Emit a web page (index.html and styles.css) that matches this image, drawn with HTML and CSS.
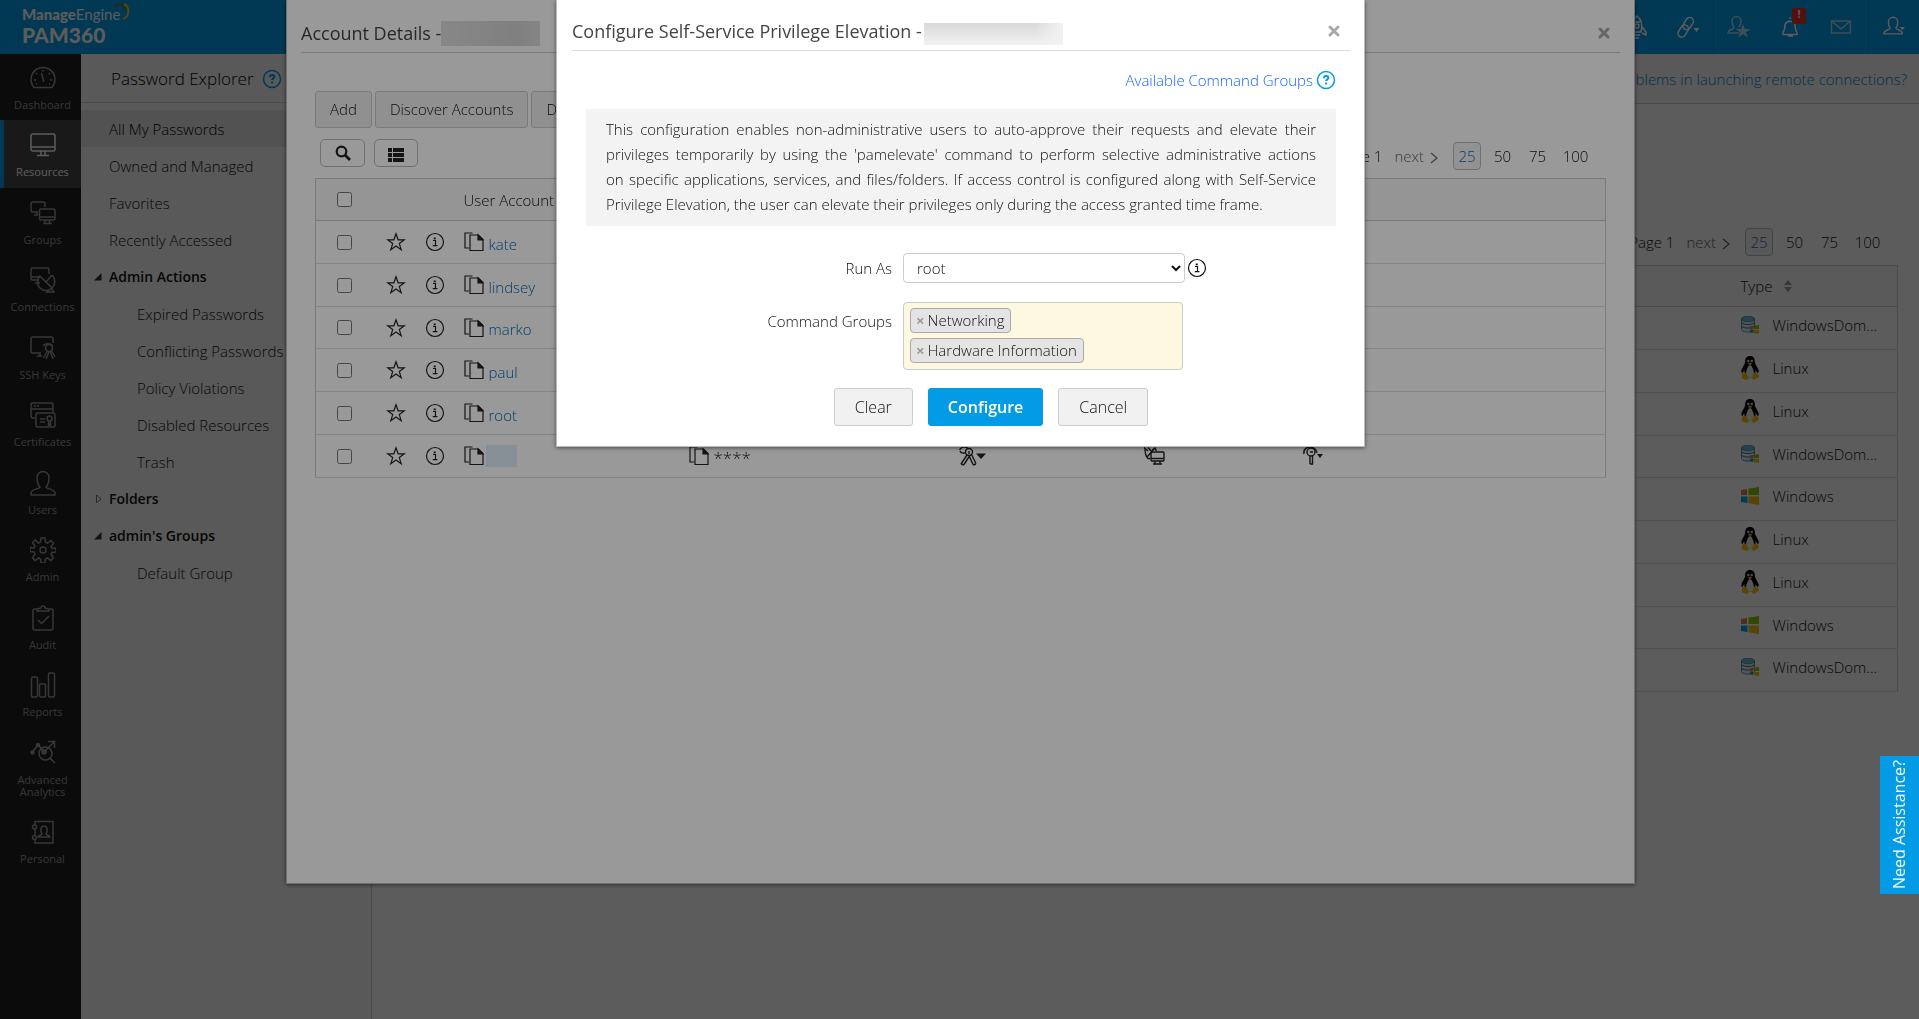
FILE: index.html
```html
<!DOCTYPE html>
<html lang="en">
<head>
<meta charset="utf-8">
<title>ManageEngine PAM360</title>
<link rel="stylesheet" href="styles.css">
</head>
<body>
<svg class="sprite" aria-hidden="true">
  <symbol id="i-dashboard" viewBox="0 0 26 26"><path d="M4 22.500H22A12 12 0 1 0 4 22.500Z" stroke-linejoin="round"/><path d="M11.500 8l2 7.500M13 5v1.500M6 8l1.200 1.200M20 8l-1.200 1.200M4 15h2M20 15h2M6 19h1M19 19h1M13.500 15v2"/></symbol>
  <symbol id="i-resources" viewBox="0 0 26 26"><rect x="1" y="2" width="24" height="17" rx="2"/><path d="M1 15h24M11 19v4M15 19v4M7 23.500h12"/></symbol>
  <symbol id="i-groups" viewBox="0 0 26 26"><path d="M8 12H2.500A1.500 1.500 0 0 1 1 10.500V3.500A1.500 1.500 0 0 1 2.500 2h11A1.500 1.500 0 0 1 15 3.500V7M4 15h4M7 12v3"/><rect x="9.500" y="9" width="15.500" height="11" rx="1.500"/><path d="M9.500 17H25M15 20v3M19.500 20v3M13 23.500h9"/></symbol>
  <symbol id="i-connections" viewBox="0 0 26 26"><path d="M9 13H2.500A1.500 1.500 0 0 1 1 11.500V2.500A1.500 1.500 0 0 1 2.500 1h15A1.500 1.500 0 0 1 19 2.500V7M1 10h8M5 16h5M8 13v3M10 9a8 8 0 0 0 12 12ZM16 15l6-7M22 8a9 9 0 0 1 0 13M21 21l3 4h-7l3-3"/></symbol>
  <symbol id="i-ssh" viewBox="0 0 26 26"><path d="M11 18H2.500A1.500 1.500 0 0 1 1 16.500V3.500A1.500 1.500 0 0 1 2.500 2h19A1.500 1.500 0 0 1 23 3.500V8M7 21h5M10 18v3M13 11c2-3 7-3 10 0"/><circle cx="19" cy="13" r="3.500"/><path d="M17.500 16L13.500 23M19 17l-3 7M20 16l3 8M21 15l4 7"/></symbol>
  <symbol id="i-cert" viewBox="0 0 26 26"><path d="M5 16H2.500A1.500 1.500 0 0 1 1 14.500V2.500A1.500 1.500 0 0 1 2.500 1h19A1.500 1.500 0 0 1 23 2.500V10M1 7h22M4 4h2M7 4h2"/><rect x="6" y="11" width="19" height="14" rx="1.500"/><path d="M10 17h5M10 20h5"/><circle cx="19.500" cy="16.500" r="2.500"/><path d="M18.500 19v4l1-1 1 1v-4"/></symbol>
  <symbol id="i-user" viewBox="0 0 26 26"><path d="M10 17C7 14 7 11 7 7.500A6 6 0 0 1 19 7.500C19 11 19 14 16 17C16 19 25 19 25 23V25H1V23C1 19 10 19 10 17Z" stroke-linejoin="round"/></symbol>
  <symbol id="i-gear" viewBox="0 0 26 26"><path d="M11 1h4l.5 4 2 1 3.300-2.500 2.700 2.700L21 9.500l1 2 4-.5v4l-4 .5-1 2 2.500 3.300-2.700 2.700-3.300-2.500-2 1-.5 4h-4l-.5-4-2-1-3.300 2.500-2.700-2.700L5 17l-1-2-4-.500v-4l4 .500 1-2-2.500-3.300 2.700-2.700L8.500 6l2-1Z"/><circle cx="13" cy="13" r="3"/></symbol>
  <symbol id="i-audit" viewBox="0 0 26 26"><path d="M8 4H4.500A1.500 1.500 0 0 0 3 5.500V23.500A1.500 1.500 0 0 0 4.500 25H21.500A1.500 1.500 0 0 0 23 23.500V5.500A1.500 1.500 0 0 0 21.500 4H18M7 6V4l4-1a2 2 0 0 1 4 0l4 1v2ZM8 15l3.500 3.500L19 11"/></symbol>
  <symbol id="i-reports" viewBox="0 0 26 26"><rect x="1.500" y="5" width="6" height="20" rx="1.500"/><rect x="9.500" y="12" width="6" height="13" rx="1"/><rect x="18.500" y="1" width="6" height="24" rx="1.500"/></symbol>
  <symbol id="i-analytics" viewBox="0 0 26 26"><path d="M2.500 12L8 5l5 5M15 11l9-9M18 1.500h6.500V8M20 18l5 5"/><circle cx="15.500" cy="13.500" r="6.500"/><circle cx="2.500" cy="12.500" r="1.500" fill="currentColor"/><circle cx="8" cy="5" r="1.500" fill="currentColor"/><circle cx="14" cy="12" r="2" fill="currentColor"/></symbol>
  <symbol id="i-personal" viewBox="0 0 26 26"><path d="M5 6V2.500h18V24H5v-3M5 10v6"/><circle cx="4.500" cy="8" r="2"/><circle cx="4.500" cy="18.500" r="2"/><path d="M12 15c-2-3-1.500-8 2-8s4 5 2 8c0 1 4 1 4 3H8c0-2 4-2 4-3Z"/></symbol>
  <symbol id="i-rocket" viewBox="0 0 20 24"><path d="M6 17C4 9 6 4 10 1c4 3 6 8 4 16ZM5 12l-4 5v3l4-2M15 12l4 5v3l-4-2M7 20h6M8 23h4M7 7h6"/><circle cx="10" cy="11" r="2"/></symbol>
  <symbol id="i-link" viewBox="0 0 24 24"><rect x="8.500" y="2" width="7.500" height="13" rx="3.700" transform="rotate(32 12.200 8.500)"/><rect x="3.500" y="9.500" width="7.500" height="13" rx="3.700" transform="rotate(32 7.200 16)"/><path d="M17.500 13h6l-3 4Z" fill="currentColor" stroke="none"/></symbol>
  <symbol id="i-userstar" viewBox="0 0 24 24"><path d="M12 18H1c0-4 6-3 6-5.500C5 10 5 8 5 6a4.500 4.500 0 0 1 9 0c0 2 0 4-2 6.500"/><path d="M16 9l2 5h5.500l-4.500 3.200 1.800 5.300L16 19.300l-4.800 3.200 1.800-5.300L8.500 14H14Z" fill="currentColor" stroke="none"/></symbol>
  <symbol id="i-bell" viewBox="0 0 24 24"><path d="M5 17.500c1.500-2 2-4 2-8a5.500 5.500 0 0 1 10 0c0 4 .500 6 2 8v2H5ZM10 21h5M12 4V2"/></symbol>
  <symbol id="i-mail" viewBox="0 0 24 24"><rect x="2.500" y="6" width="19" height="12"/><path d="M2.500 6L12 14l9.500-8"/></symbol>
  <symbol id="i-profile" viewBox="0 0 26 24"><path d="M9 13C6.500 11 7 8 7 6.500a5 5 0 0 1 10 0C17 8 17.500 11 15 13c0 2.500 7 1.500 7 6.500H2c0-5 7-4 7-6.500Z"/><path d="M19 12h6l-3 3.500Z" fill="currentColor" stroke="none"/></symbol>
  <symbol id="i-help" viewBox="0 0 20 20"><circle cx="10" cy="10" r="8.500"/><path d="M7.800 8.200c0-3 4.600-3 4.600-.4 0 1.700-2.300 1.500-2.300 3.200M10.100 12.600v1.800" stroke-width="2"/></symbol>
  <symbol id="i-info" viewBox="0 0 20 20"><circle cx="10" cy="10" r="8.500"/><path d="M8 8.500h2.500v5M7.800 13.700h4.600"/><path d="M9.700 5.500v1.800" stroke-width="2"/></symbol>
  <symbol id="i-star" viewBox="0 0 20 20"><path d="M10 1.800l2.100 6h6.300l-5.100 3.800 1.900 6.100L10 14l-5.200 3.700 1.900-6.100-5.100-3.800h6.300Z"/></symbol>
  <symbol id="i-copy" viewBox="0 0 20 20"><path d="M8.500 1H1v15h4"/><path d="M6 3h8.500L19 7.500V18.500H6Z"/><path d="M14 3l5 5h-5Z" fill="currentColor"/></symbol>
  <symbol id="i-keys" viewBox="0 0 28 20"><circle cx="11" cy="6" r="3.500"/><path d="M1.500 4c1-3 6-4 8-2M2 5c1 3 4 2 5 2M9 9L3 18M11.500 10L6 18.500M11 9.500l4 9M13.500 8.500l4.500 9M3 18l3 1M15 19l3-1M11 5v3"/><path d="M18 7.500h10L23 13Z" fill="currentColor" stroke="none"/></symbol>
  <symbol id="i-remote" viewBox="0 0 22 20"><path d="M1 1.500l4 3.500M2 2c0 5 1 9 3 10.500h2M5 1.500L9 6M12 2L4 11M9 4l3-2 1.500 3"/><rect x="8" y="6" width="13" height="9" rx="1"/><path d="M8 12.500h13M12 15v3M17 15v3M10 18h9"/></symbol>
  <symbol id="i-key" viewBox="0 0 22 20"><circle cx="9" cy="6" r="4"/><path d="M2 8C1 3 5 1 8 1s6 2 7 6M8 10v8M10.500 10v8h-2.500M8 6h3"/><path d="M15 8h6l-3 4Z" fill="currentColor" stroke="none"/></symbol>
  <symbol id="i-search" viewBox="0 0 16 16"><circle cx="6.500" cy="6.500" r="4.800" stroke-width="2.200"/><path d="M10 10l5 5" stroke-width="2.800"/></symbol>
  <symbol id="i-list" viewBox="0 0 16 16"><path d="M0 1h4v4H0ZM5 1h11v4H5ZM0 6h4v4H0ZM5 6h11v4H5ZM0 11h4v4H0ZM5 11h11v4H5Z" fill="currentColor" stroke="none"/></symbol>
  <symbol id="i-next" viewBox="0 0 8 12"><path d="M1 1l6 5-6 5"/></symbol>
  <symbol id="i-close" viewBox="0 0 12 12"><path d="M2 2l8 8M10 2l-8 8" stroke-width="3" stroke-linecap="round"/></symbol>
  <symbol id="i-windows" viewBox="0 0 18 18"><path d="M0 3l6-1v6H0Z" fill="#f2744a" stroke="none"/><path d="M7.500 1.700L18 0v8H7.500Z" fill="#8cc400" stroke="none"/><path d="M0 9.500h6.500V16L0 15Z" fill="#00a5e8" stroke="none"/><path d="M7.500 9.500H18V18L7.500 16.200Z" fill="#f5bd0c" stroke="none"/></symbol>
  <symbol id="i-domain" viewBox="0 0 18 18"><path d="M.5 3v10.500c0 1.500 3 2.500 6.500 2.500s6.500-1 6.500-2.500V3Z" fill="#e4edf2" stroke="#4790ad"/><path d="M1 7c2 2 10 2 12 0M1 10.500c2 2 10 2 12 0" fill="none" stroke="#36718c"/><ellipse cx="7" cy="3" rx="6.500" ry="2.800" fill="#6fb8d4" stroke="#4790ad"/><path d="M9 10.500l3-.5v3.500H9Z" fill="#f2744a" stroke="none"/><path d="M12.800 10L18 9v4h-5.200Z" fill="#8cc400" stroke="none"/><path d="M9 14h3.300v3L9 16.500Z" fill="#00a5e8" stroke="none"/><path d="M12.800 14H18v4l-5.200-.8Z" fill="#f5bd0c" stroke="none"/></symbol>
  <symbol id="i-linux" viewBox="0 0 18 24"><path d="M9 0c3.300 0 4.800 2.200 4.800 5 0 4.500 4 6.500 4 11l-1.300 1-2-3c.5 5-1.500 8-5.500 8s-6-3-5.500-8l-2 3-1.300-1c0-4.500 4-6.500 4-11 0-2.800 1.500-5 4.800-5Z" fill="#000" stroke="none"/><path d="M9 9c2 0 4 6 4 9s-1.500 4-4 4-4-1-4-4 2-9 4-9Z" fill="#eee" stroke="none"/><circle cx="7.300" cy="5" r="1.200" fill="#ddd" stroke="none"/><circle cx="10.700" cy="5" r="1.200" fill="#ddd" stroke="none"/><path d="M6.500 7.500L9 6.500l2.500 1L9 9.500Z" fill="#f29a0c" stroke="none"/><path d="M1 17.500l4-1 3 5.500-2 2-5-1.500ZM17 17.500l-4-1-2 5.500 1.500 2 5.500-3Z" fill="#f5c20c" stroke="none"/></symbol>
</svg>

<header class="topbar">
  <div class="brand">
    <div class="brand-top"><b>Manage</b>Engine<svg class="swirl" viewBox="0 0 16 18" aria-hidden="true"><path d="M1 4c3-4 9-4 10 3" stroke="#e0332e" stroke-width="2" fill="none"/><path d="M3 1c5-2 9 1 9 6" stroke="#17a05d" stroke-width="3" fill="none"/><path d="M10 1c6 3 6 12-1 15" stroke="#e3c52d" stroke-width="2" fill="none"/></svg></div>
    <div class="brand-name">PAM360</div>
  </div>
  <nav class="tools" aria-label="Tools">
    <a href="#" aria-label="Launch"><svg class="ic t24"><use href="#i-rocket"/></svg></a>
    <a href="#" aria-label="Links"><svg class="ic t24"><use href="#i-link"/></svg></a>
    <a href="#" class="split dim" aria-label="Favorite users"><svg class="ic t24"><use href="#i-userstar"/></svg></a>
    <a href="#" aria-label="Alerts"><svg class="ic t24"><use href="#i-bell"/></svg><span class="badge">!</span></a>
    <a href="#" class="dim" aria-label="Messages"><svg class="ic t24"><use href="#i-mail"/></svg></a>
    <a href="#" class="split" aria-label="Profile"><svg class="ic t24"><use href="#i-profile"/></svg></a>
  </nav>
</header>

<div class="shell">
  <nav class="rail" aria-label="Main">
    <a href="#"><svg class="ic"><use href="#i-dashboard"/></svg>Dashboard</a>
    <a href="#" class="active"><svg class="ic"><use href="#i-resources"/></svg>Resources</a>
    <a href="#"><svg class="ic"><use href="#i-groups"/></svg>Groups</a>
    <a href="#"><svg class="ic"><use href="#i-connections"/></svg>Connections</a>
    <a href="#"><svg class="ic"><use href="#i-ssh"/></svg>SSH Keys</a>
    <a href="#"><svg class="ic"><use href="#i-cert"/></svg>Certificates</a>
    <a href="#"><svg class="ic"><use href="#i-user"/></svg>Users</a>
    <a href="#"><svg class="ic"><use href="#i-gear"/></svg>Admin</a>
    <a href="#"><svg class="ic"><use href="#i-audit"/></svg>Audit</a>
    <a href="#"><svg class="ic"><use href="#i-reports"/></svg>Reports</a>
    <a href="#" class="tall"><svg class="ic"><use href="#i-analytics"/></svg>Advanced<br>Analytics</a>
    <a href="#"><svg class="ic"><use href="#i-personal"/></svg>Personal</a>
  </nav>

  <aside class="explorer">
    <h2>Password Explorer <svg class="ic t20 blue"><use href="#i-help"/></svg></h2>
    <ul class="tree">
      <li><a href="#" class="current">All My Passwords</a></li>
      <li><a href="#">Owned and Managed</a></li>
      <li><a href="#">Favorites</a></li>
      <li><a href="#">Recently Accessed</a></li>
      <li><a href="#" class="group"><svg class="tri" viewBox="0 0 8 8"><path d="M7.500 0v7.500H0Z" fill="#333"/></svg>Admin Actions</a>
        <ul>
          <li><a href="#">Expired Passwords</a></li>
          <li><a href="#">Conflicting Passwords</a></li>
          <li><a href="#">Policy Violations</a></li>
          <li><a href="#">Disabled Resources</a></li>
          <li><a href="#">Trash</a></li>
        </ul>
      </li>
      <li><a href="#" class="group"><svg class="tri" viewBox="0 0 8 8"><path d="M2.500 0l4.500 4-4.500 4Z" fill="none" stroke="#777"/></svg>Folders</a></li>
      <li><a href="#" class="group"><svg class="tri" viewBox="0 0 8 8"><path d="M7.500 0v7.500H0Z" fill="#333"/></svg>admin's Groups</a>
        <ul><li><a href="#">Default Group</a></li></ul>
      </li>
    </ul>
  </aside>

  <main class="content">
    <div class="notice"><a href="#">Problems in launching remote connections?</a></div>
    <div class="listing">
      <nav class="pager" aria-label="Resource pages">
        <span class="page">Page 1</span>
        <a href="#" class="next">next <svg class="ic"><use href="#i-next"/></svg></a>
        <a href="#" class="on">25</a><a href="#">50</a><a href="#">75</a><a href="#">100</a>
      </nav>
      <table class="grid resources">
        <thead><tr><th></th><th class="type">Type <svg class="sort" viewBox="0 0 8 12"><path d="M0 5l4-5 4 5ZM0 7l4 5 4-5Z" fill="#999"/></svg></th></tr></thead>
        <tbody>
          <tr><td></td><td><div class="kind"><svg class="os"><use href="#i-domain"/></svg>WindowsDom...</div></td></tr>
          <tr><td></td><td><div class="kind"><svg class="os tux"><use href="#i-linux"/></svg>Linux</div></td></tr>
          <tr><td></td><td><div class="kind"><svg class="os tux"><use href="#i-linux"/></svg>Linux</div></td></tr>
          <tr><td></td><td><div class="kind"><svg class="os"><use href="#i-domain"/></svg>WindowsDom...</div></td></tr>
          <tr><td></td><td><div class="kind"><svg class="os"><use href="#i-windows"/></svg>Windows</div></td></tr>
          <tr><td></td><td><div class="kind"><svg class="os tux"><use href="#i-linux"/></svg>Linux</div></td></tr>
          <tr><td></td><td><div class="kind"><svg class="os tux"><use href="#i-linux"/></svg>Linux</div></td></tr>
          <tr><td></td><td><div class="kind"><svg class="os"><use href="#i-windows"/></svg>Windows</div></td></tr>
          <tr><td></td><td><div class="kind"><svg class="os"><use href="#i-domain"/></svg>WindowsDom...</div></td></tr>
        </tbody>
      </table>
    </div>
  </main>
</div>

<div class="overlay">
  <section class="dialog details" role="dialog" aria-label="Account Details">
    <header class="dialog-head">
      <h2>Account Details -</h2><span class="masked-host"></span>
      <button class="close" aria-label="Close"><svg class="ic"><use href="#i-close"/></svg></button>
    </header>
    <div class="details-body">
      <div class="actions">
        <button class="btn">Add</button><button class="btn">Discover Accounts</button><button class="btn">Delete</button>
      </div>
      <div class="bar">
        <button class="mini search" aria-label="Search"><svg class="ic t16"><use href="#i-search"/></svg></button>
        <button class="mini columns" aria-label="Columns"><svg class="ic t16"><use href="#i-list"/></svg></button>
        <nav class="pager" aria-label="Account pages">
          <span class="page">Page 1</span>
          <a href="#" class="next">next <svg class="ic"><use href="#i-next"/></svg></a>
          <a href="#" class="on">25</a><a href="#">50</a><a href="#">75</a><a href="#">100</a>
        </nav>
      </div>
      <table class="grid accounts">
        <colgroup><col class="c-check"><col class="c-star"><col class="c-info"><col class="c-user"><col class="c-pass"><col class="c-keys"><col class="c-remote"><col></colgroup>
        <thead><tr><th><input type="checkbox" aria-label="Select all"></th><th></th><th></th><th>User Account</th><th></th><th></th><th></th><th></th></tr></thead>
        <tbody>
          <tr><td><input type="checkbox" aria-label="kate"></td><td><svg class="ic t20"><use href="#i-star"/></svg></td><td><svg class="ic t20"><use href="#i-info"/></svg></td><td><div class="acct"><svg class="ic t20"><use href="#i-copy"/></svg><a href="#">kate</a></div></td><td></td><td></td><td></td><td></td></tr>
          <tr><td><input type="checkbox" aria-label="lindsey"></td><td><svg class="ic t20"><use href="#i-star"/></svg></td><td><svg class="ic t20"><use href="#i-info"/></svg></td><td><div class="acct"><svg class="ic t20"><use href="#i-copy"/></svg><a href="#">lindsey</a></div></td><td></td><td></td><td></td><td></td></tr>
          <tr><td><input type="checkbox" aria-label="marko"></td><td><svg class="ic t20"><use href="#i-star"/></svg></td><td><svg class="ic t20"><use href="#i-info"/></svg></td><td><div class="acct"><svg class="ic t20"><use href="#i-copy"/></svg><a href="#">marko</a></div></td><td></td><td></td><td></td><td></td></tr>
          <tr><td><input type="checkbox" aria-label="paul"></td><td><svg class="ic t20"><use href="#i-star"/></svg></td><td><svg class="ic t20"><use href="#i-info"/></svg></td><td><div class="acct"><svg class="ic t20"><use href="#i-copy"/></svg><a href="#">paul</a></div></td><td></td><td></td><td></td><td></td></tr>
          <tr><td><input type="checkbox" aria-label="root"></td><td><svg class="ic t20"><use href="#i-star"/></svg></td><td><svg class="ic t20"><use href="#i-info"/></svg></td><td><div class="acct"><svg class="ic t20"><use href="#i-copy"/></svg><a href="#">root</a></div></td><td></td><td></td><td></td><td></td></tr>
          <tr><td><input type="checkbox" aria-label="Account"></td><td><svg class="ic t20"><use href="#i-star"/></svg></td><td><svg class="ic t20"><use href="#i-info"/></svg></td><td><div class="acct masked"><svg class="ic t20"><use href="#i-copy"/></svg><span class="masked-user"></span></div></td><td><div class="acct"><svg class="ic t20"><use href="#i-copy"/></svg><span class="stars">****</span></div></td><td><svg class="ic w28"><use href="#i-keys"/></svg></td><td><svg class="ic w22"><use href="#i-remote"/></svg></td><td><svg class="ic w22"><use href="#i-key"/></svg></td></tr>
        </tbody>
      </table>
    </div>
  </section>
</div>

<div class="overlay">
  <section class="dialog elevate" role="dialog" aria-label="Configure Self-Service Privilege Elevation">
    <header class="dialog-head">
      <h2>Configure Self-Service Privilege Elevation -</h2><span class="masked-account"></span>
      <button class="close" aria-label="Close"><svg class="ic"><use href="#i-close"/></svg></button>
    </header>
    <form class="elevate-body">
      <div class="helplink"><a href="#">Available Command Groups</a><svg class="ic t20 blue"><use href="#i-help"/></svg></div>
      <p class="blurb">This configuration enables non-administrative users to auto-approve their requests and elevate their privileges temporarily by using the 'pamelevate' command to perform selective administrative actions on&nbsp;specific applications, services, and files/folders. If access control is configured along with Self-Service Privilege Elevation, the user can elevate their privileges only during the access granted time frame.</p>
      <div class="fields">
        <label for="run-as">Run As</label>
        <div class="runas"><select id="run-as"><option>root</option></select><svg class="ic t20"><use href="#i-info"/></svg></div>
        <span class="label" id="cg">Command Groups</span>
        <ul class="chips" aria-labelledby="cg">
          <li><button type="button" aria-label="Remove Networking">×</button>Networking</li>
          <li><button type="button" aria-label="Remove Hardware Information">×</button>Hardware Information</li>
        </ul>
      </div>
      <div class="buttons">
        <button type="button" class="btn big">Clear</button>
        <button type="button" class="btn big primary">Configure</button>
        <button type="button" class="btn big">Cancel</button>
      </div>
    </form>
  </section>
</div>

<button class="assist">Need Assistance?</button>
</body>
</html>
```
FILE: styles.css
```css
* { box-sizing: border-box; }

body {
  margin: 0;
  min-height: 100vh;
  display: flex;
  flex-direction: column;
  font: 300 15px/20px "Open Sans", "Noto Sans", sans-serif;
  color: #111;
  background: #fff;
  overflow: hidden;
}

a { color: inherit; text-decoration: none; }
ul { list-style: none; margin: 0; padding: 0; }
h2 { margin: 0; font-weight: 400; }
button, select { font: inherit; color: inherit; }
.sprite { display: none; }

.ic {
  flex: none;
  display: block;
  width: 26px;
  height: 26px;
  fill: none;
  stroke: currentColor;
  stroke-width: 1.5;
}
.t24 { width: 24px; height: 24px; }
.t20 { width: 20px; height: 20px; stroke-width: 1.2; }
.t16 { width: 16px; height: 16px; }
.w22 { width: 22px; height: 20px; stroke-width: 1.4; }
.w28 { width: 28px; height: 20px; stroke-width: 1.4; }
.blue { color: #039be5; stroke-width: 1.5; }

/* Top bar */
.topbar {
  height: 54px;
  display: flex;
  justify-content: space-between;
  background: #039be5;
  color: #fff;
}
.brand { padding: 5px 0 0 22px; font-family: Lato, "Open Sans", sans-serif; }
.brand-top { position: relative; font-size: 15px; line-height: 19px; font-weight: 400; }
.brand-top b { font-weight: 900; }
.swirl { position: absolute; left: 92px; top: -2px; width: 16px; height: 18px; }
.brand-name { font-size: 21px; line-height: 22px; font-weight: 900; }
.tools { display: flex; }
.tools a {
  position: relative;
  width: 51px;
  display: flex;
  align-items: center;
  justify-content: center;
}
.tools a:last-child { margin-left: 2px; }
.tools .split { border-left: 1px solid #0288d1; }
.tools .dim { color: #a9d8f2; }
.badge {
  position: absolute;
  left: 28px;
  top: 8px;
  width: 14px;
  height: 16px;
  border-radius: 2px;
  background: #e53022;
  font: 700 11px/12px "Open Sans", sans-serif;
  text-align: center;
}

/* Icon rail */
.shell { flex: 1; display: flex; }
.rail { width: 81px; flex: none; background: #1f1f1f; }
.rail a {
  height: 67px;
  padding-top: 12px;
  display: flex;
  flex-direction: column;
  align-items: center;
  border-left: 4px solid transparent;
  color: #999;
  font-size: 11px;
  line-height: 12px;
  font-weight: 400;
  text-align: center;
}
.rail .ic { margin-bottom: 8px; }
.rail a:nth-child(even) { height: 68px; }
.rail a:first-child { height: 66px; padding-top: 11px; }
.rail a.tall { height: 79px; }
.rail .active { background: #474747; border-left-color: #039be5; color: #fff; }

/* Password explorer */
.explorer { width: 291px; flex: none; background: #f5f5f5; border-right: 1px solid #ccc; }
.explorer h2 {
  height: 49px;
  padding: 2px 0 0 30px;
  display: flex;
  align-items: center;
  gap: 8px;
  border-bottom: 1px solid #ccc;
  font-size: 17px;
  font-weight: 300;
  color: #000;
}
.tree { padding-top: 7px; }
.tree a { display: flex; align-items: center; height: 37px; padding-left: 28px; }
.tree ul a { padding-left: 56px; }
.tree .current { background: #e3e3e3; color: #000; }
.tree .group { padding-left: 13px; font-size: 14px; font-weight: 600; }
.tri { width: 8px; height: 8px; margin-right: 7px; }

/* Resource list */
.content { flex: 1; min-width: 0; }
.notice {
  height: 50px;
  padding-right: 12px;
  display: flex;
  align-items: center;
  justify-content: flex-end;
  background: #f5f5f5;
  border-bottom: 1px solid #ccc;
  color: #0288d1;
}
.listing { padding: 124px 21px 0; }
.pager { display: flex; align-items: center; justify-content: flex-end; margin-right: 10px; }
.pager a { width: 35px; text-align: center; }
.pager a:last-child { width: 41px; }
.pager .page { margin-right: 12px; }
.pager .next { display: flex; align-items: center; gap: 6px; width: auto; margin-right: 15px; color: #666; }
.pager .next .ic { width: 8px; height: 12px; margin-top: 4px; stroke-width: 1.2; }
.pager .on {
  width: 28px;
  line-height: 26px;
  margin-right: 4px;
  border: 1px solid #bbb;
  border-radius: 4px;
  background: #f3f3f3;
  color: #1f5fae;
}

.grid { width: 100%; border-collapse: collapse; border: 1px solid #ccc; table-layout: fixed; }
.grid th { height: 42px; padding: 0; background: #f9f9f9; text-align: left; font-weight: 300; border-bottom: 1px solid #ccc; }
.grid td { height: 43px; padding: 0; border-bottom: 1px solid #ddd; }
.resources { margin-top: 9px; }
.resources th { height: 41px; }
.resources td { padding-bottom: 6px; }
.resources .type { width: 157px; }
.resources tr:nth-child(4n) td { height: 42px; }
.sort { width: 8px; height: 12px; margin-left: 8px; }
.kind { display: flex; align-items: center; gap: 14px; }
.os { width: 18px; height: 18px; }
.tux { height: 24px; }

/* Dialogs */
.overlay {
  position: fixed;
  inset: 0;
  padding-left: 2px;
  display: flex;
  align-items: flex-start;
  justify-content: center;
  background: rgba(0, 0, 0, .4);
}
.dialog {
  max-width: 100%;
  background: #fff;
  border: 1px solid #bbb;
  border-top: 0;
  box-shadow: 0 1px 4px rgba(0, 0, 0, .5);
  padding: 0 14px;
}
.details { width: 1349px; min-height: 884px; padding-top: 14px; }
.elevate { width: 809px; padding: 12px 14px 0 15px; }
.dialog-head { display: flex; align-items: center; height: 39px; border-bottom: 1px solid #ddd; }
.details .dialog-head { border-color: #ccc; }
.dialog-head h2 { font-size: 18px; line-height: 24px; color: #444; }
.masked-account { width: 139px; height: 22px; margin: 6px 0 0 2px; background: linear-gradient(90deg, transparent 80%, #f2f2f2), linear-gradient(#dadada, #f1f1f1); }
.masked-host { width: 99px; height: 25px; background: linear-gradient(90deg, #e2e2e2, #d5d5d5 75%, #dedede); }
.close { margin-left: auto; margin-right: 10px; padding: 0; border: 0; background: none; color: #aaa; }
.close .ic { width: 12px; height: 12px; }

.details-body { padding: 38px 14px 0; }
.actions { display: flex; gap: 3px; }
.btn {
  height: 37px;
  padding: 0 14px 2px;
  border: 1px solid #ccc;
  border-radius: 3px;
  background: #f1f1f1;
}
.bar { display: flex; align-items: center; height: 50px; padding-left: 5px; }
.mini {
  height: 28px;
  display: flex;
  align-items: center;
  justify-content: center;
  padding: 0;
  border: 1px solid #bbb;
  border-radius: 5px;
  background: #fff;
  color: #222;
}
.search { width: 45px; }
.columns { width: 44px; margin-left: 9px; }
.columns .ic { margin-top: 4px; }
.bar .pager { margin: 6px 10px 0 auto; }
.grid td .ic { color: #222; }
.grid input { display: block; width: 15px; height: 15px; margin: 0 0 0 21px; }
.accounts tr:nth-child(3) td { height: 42px; }
.c-check { width: 70px; }
.c-star { width: 39px; }
.c-info { width: 39px; }
.c-user { width: 225px; }
.c-pass { width: 269px; }
.c-keys { width: 185px; }
.c-remote { width: 159px; }
.acct { display: flex; align-items: center; gap: 5px; color: #026aa8; }
.acct.masked { gap: 2px; }
.acct a { padding-top: 3px; }
.masked-user { width: 31px; height: 22px; background: #dfedfa; }
.stars { padding-top: 4px; font-size: 17px; color: #222; }

/* Elevation form */
.elevate-body { padding: 19px 14px 20px; }
.helplink { display: flex; align-items: center; justify-content: flex-end; gap: 3px; color: #1565ff; }
.blurb { margin: 19px 0 27px; padding: 8px 20px 9px; background: #f3f3f3; line-height: 25px; text-align: justify; }
.fields { display: grid; grid-template-columns: 306px 1fr; column-gap: 11px; row-gap: 19px; }
.fields label, .label { text-align: right; line-height: 30px; }
.label { line-height: 38px; }
.runas { display: flex; align-items: center; gap: 2px; }
.runas select { width: 282px; height: 30px; padding-left: 9px; border: 1px solid #ccc; border-radius: 4px; background: #fff; }
.chips {
  width: 280px;
  min-height: 68px;
  padding: 5px 6px;
  display: flex;
  flex-direction: column;
  align-items: flex-start;
  gap: 5px;
  border: 1px solid #ccc;
  border-radius: 4px;
  background: #fff8e1;
}
.chips li {
  height: 25px;
  display: flex;
  align-items: center;
  padding: 0 6px 2px 5px;
  border: 1px solid #aaa;
  border-radius: 4px;
  background: #e4e4e4;
}
.chips button { padding: 0; border: 0; margin-right: 3px; background: none; color: #999; font-weight: 700; }
.buttons { display: flex; justify-content: center; gap: 15px; margin-top: 18px; padding-left: 60px; }
.big { height: 38px; padding: 0 20px; font-size: 16px; }
.primary { padding: 0 19px; border-color: #039be5; background: #039be5; color: #fff; font-weight: 600; }

.assist {
  position: fixed;
  right: 0;
  top: 756px;
  width: 39px;
  height: 138px;
  padding: 0;
  border: 0;
  background: #039be5;
  color: #fff;
  font-size: 16px;
  font-weight: 400;
  writing-mode: vertical-rl;
  transform: rotate(180deg);
}
```
